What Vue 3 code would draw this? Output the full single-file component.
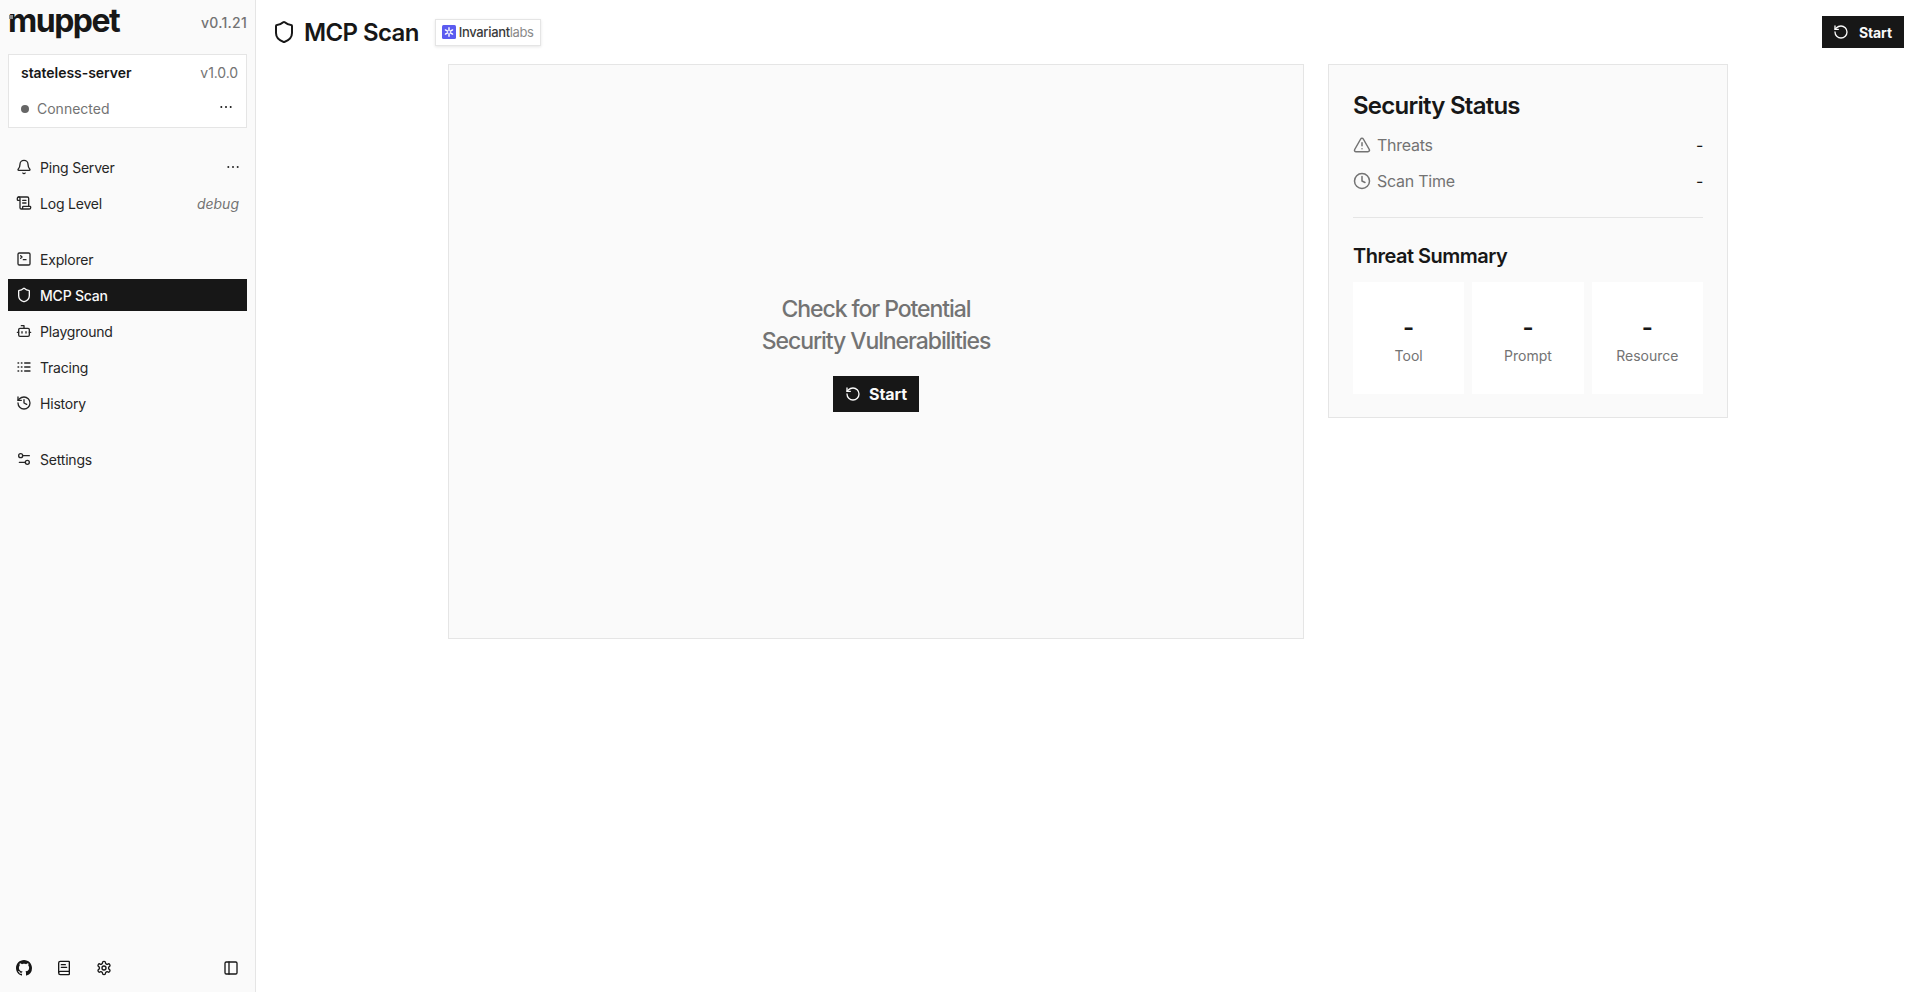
<script setup>
import { h } from 'vue'

const P = {
  shield: ['M20 13c0 5-3.5 7.5-7.66 8.95a1 1 0 0 1-.67-.01C7.5 20.5 4 18 4 13V6a1 1 0 0 1 1-1c2 0 4.5-1.2 6.24-2.72a1.17 1.17 0 0 1 1.52 0C14.51 3.81 17 5 19 5a1 1 0 0 1 1 1z'],
  bell: ['M10.268 21a2 2 0 0 0 3.464 0', 'M3.262 15.326A1 1 0 0 0 4 17h16a1 1 0 0 0 .74-1.673C19.41 13.956 18 12.499 18 8A6 6 0 0 0 6 8c0 4.499-1.411 5.956-2.738 7.326'],
  scroll: ['M15 12h-5', 'M15 8h-5', 'M19 17V5a2 2 0 0 0-2-2H4', 'M8 21h12a2 2 0 0 0 2-2v-1a1 1 0 0 0-1-1H11a1 1 0 0 0-1 1v1a2 2 0 1 1-4 0V5a2 2 0 1 0-4 0v2a1 1 0 0 0 1 1h3'],
  terminal: ['m7 11 2-2-2-2', 'M11 13h4', 'M5 3h14a2 2 0 0 1 2 2v14a2 2 0 0 1-2 2H5a2 2 0 0 1-2-2V5a2 2 0 0 1 2-2z'],
  bot: ['M12 8V4H8', 'M6 8h12a2 2 0 0 1 2 2v8a2 2 0 0 1-2 2H6a2 2 0 0 1-2-2v-8a2 2 0 0 1 2-2z', 'M2 14h2', 'M20 14h2', 'M15 13v2', 'M9 13v2'],
  logs: ['M13 12h8', 'M13 18h8', 'M13 6h8', 'M3 12h1', 'M3 18h1', 'M3 6h1', 'M8 12h1', 'M8 18h1', 'M8 6h1'],
  history: ['M3 12a9 9 0 1 0 9-9 9.75 9.75 0 0 0-6.74 2.74L3 8', 'M3 3v5h5', 'M12 7v5l4 2'],
  sliders: ['M20 7h-9', 'M14 17H5', 'M20 17a3 3 0 1 1-6 0 3 3 0 0 1 6 0z', 'M10 7a3 3 0 1 1-6 0 3 3 0 0 1 6 0z'],
  book: ['M4 19.5v-15A2.5 2.5 0 0 1 6.5 2H19a1 1 0 0 1 1 1v18a1 1 0 0 1-1 1H6.5a1 1 0 0 1 0-5H20', 'M8 11h8', 'M8 7h6'],
  gear: ['M12.22 2h-.44a2 2 0 0 0-2 2v.18a2 2 0 0 1-1 1.73l-.43.25a2 2 0 0 1-2 0l-.15-.08a2 2 0 0 0-2.73.73l-.22.38a2 2 0 0 0 .73 2.73l.15.1a2 2 0 0 1 1 1.72v.51a2 2 0 0 1-1 1.74l-.15.09a2 2 0 0 0-.73 2.73l.22.38a2 2 0 0 0 2.73.73l.15-.08a2 2 0 0 1 2 0l.43.25a2 2 0 0 1 1 1.73V20a2 2 0 0 0 2 2h.44a2 2 0 0 0 2-2v-.18a2 2 0 0 1 1-1.73l.43-.25a2 2 0 0 1 2 0l.15.08a2 2 0 0 0 2.73-.73l.22-.39a2 2 0 0 0-.73-2.73l-.15-.08a2 2 0 0 1-1-1.74v-.5a2 2 0 0 1 1-1.74l.15-.09a2 2 0 0 0 .73-2.73l-.22-.38a2 2 0 0 0-2.73-.73l-.15.08a2 2 0 0 1-2 0l-.43-.25a2 2 0 0 1-1-1.73V4a2 2 0 0 0-2-2z', 'M15 12a3 3 0 1 1-6 0 3 3 0 0 1 6 0z'],
  panel: ['M5 3h14a2 2 0 0 1 2 2v14a2 2 0 0 1-2 2H5a2 2 0 0 1-2-2V5a2 2 0 0 1 2-2z', 'M9 3v18'],
  rotate: ['M3 12a9 9 0 1 0 9-9 9.75 9.75 0 0 0-6.74 2.74L3 8', 'M3 3v5h5'],
  alert: ['m21.73 18-8-14a2 2 0 0 0-3.48 0l-8 14A2 2 0 0 0 4 21h16a2 2 0 0 0 1.73-3', 'M12 9v4', 'M12 17h.01'],
  clock: ['M22 12a10 10 0 1 1-20 0 10 10 0 0 1 20 0z', 'M12 6v6l4 2'],
  dots: ['M12 12h.01', 'M19 12h.01', 'M5 12h.01']
}

const Icon = (props) =>
  h('svg', {
    width: props.size || 16, height: props.size || 16, viewBox: '0 0 24 24', fill: 'none',
    stroke: 'currentColor', 'stroke-width': props.sw || 2, 'stroke-linecap': 'round', 'stroke-linejoin': 'round'
  }, P[props.name].map((d) => h('path', { d })))
Icon.props = ['name', 'size', 'sw']

const group1 = [
  { icon: 'bell', label: 'Ping Server', more: true },
  { icon: 'scroll', label: 'Log Level', note: 'debug' }
]
const group2 = [
  { icon: 'terminal', label: 'Explorer' },
  { icon: 'shield', label: 'MCP Scan', active: true },
  { icon: 'bot', label: 'Playground' },
  { icon: 'logs', label: 'Tracing' },
  { icon: 'history', label: 'History' }
]
const group3 = [{ icon: 'sliders', label: 'Settings' }]
const groups = [group1, group2, group3]
const summary = ['Tool', 'Prompt', 'Resource']
</script>

<template>
  <div class="app">
    <aside class="side">
      <div class="brand">
        <span class="logo"><i class="logo-dot"></i>muppet</span>
        <span class="ver">v0.1.21</span>
      </div>
      <div class="server">
        <div class="srow">
          <span class="sname">stateless-server</span>
          <span class="sver">v1.0.0</span>
        </div>
        <div class="srow low">
          <span class="conn"><i class="dot"></i>Connected</span>
          <Icon name="dots" :sw="3" class="sdots" />
        </div>
      </div>
      <nav class="nav">
        <div v-for="(g, i) in groups" :key="i" class="group">
          <div v-for="item in g" :key="item.label" class="item" :class="{ active: item.active }">
            <Icon :name="item.icon" />
            <span class="lbl">{{ item.label }}</span>
            <Icon v-if="item.more" name="dots" :sw="3" class="idots" />
            <em v-if="item.note" class="note">{{ item.note }}</em>
          </div>
        </div>
      </nav>
      <div class="foot">
        <svg class="gh" width="16" height="16" viewBox="0 0 16 16" fill="currentColor"><path d="M8 0C3.58 0 0 3.58 0 8c0 3.54 2.29 6.53 5.47 7.59.4.07.55-.17.55-.38 0-.19-.01-.82-.01-1.49-2.01.37-2.53-.49-2.69-.94-.09-.23-.48-.94-.82-1.13-.28-.15-.68-.52-.01-.53.63-.01 1.08.58 1.23.82.72 1.21 1.87.87 2.33.66.07-.52.28-.87.51-1.07-1.78-.2-3.64-.89-3.64-3.95 0-.87.31-1.59.82-2.15-.08-.2-.36-1.02.08-2.12 0 0 .67-.21 2.2.82.64-.18 1.32-.27 2-.27.68 0 1.36.09 2 .27 1.53-1.04 2.2-.82 2.2-.82.44 1.1.16 1.92.08 2.12.51.56.82 1.27.82 2.15 0 3.07-1.87 3.75-3.65 3.95.29.25.54.73.54 1.48 0 1.07-.01 1.93-.01 2.2 0 .21.15.46.55.38A8.013 8.013 0 0016 8c0-4.42-3.58-8-8-8z"/></svg>
        <Icon name="book" />
        <Icon name="gear" />
        <Icon name="panel" class="pushr" />
      </div>
    </aside>

    <main class="main">
      <header class="head">
        <Icon name="shield" :size="24" />
        <h1>MCP Scan</h1>
        <span class="badge">
          <svg width="14" height="14" viewBox="0 0 14 14"><rect width="14" height="14" rx="1.5" fill="#5b5bf0"/><g stroke="#fff" stroke-width="1.4" stroke-linecap="round"><path d="M7 2.8v2.6M7 8.6v2.6M3.4 4.9l2.2 1.3M8.4 7.8l2.2 1.3M10.6 4.9 8.4 6.2M5.6 7.8 3.4 9.1"/></g></svg>
          <span class="inv">Invariant<span class="labs">labs</span></span>
        </span>
        <button class="btn top"><Icon name="rotate" />Start</button>
      </header>

      <div class="content">
        <section class="scan">
          <p class="scan-t">Check for Potential<br>Security Vulnerabilities</p>
          <button class="btn"><Icon name="rotate" />Start</button>
        </section>
        <section class="status">
          <h2>Security Status</h2>
          <div class="stat"><Icon name="alert" :size="18" /><span class="stat-l">Threats</span><span class="stat-v">-</span></div>
          <div class="stat"><Icon name="clock" :size="18" /><span class="stat-l">Scan Time</span><span class="stat-v">-</span></div>
          <hr class="rule">
          <h3>Threat Summary</h3>
          <div class="cards">
            <div v-for="s in summary" :key="s" class="card">
              <b>-</b>
              <span>{{ s }}</span>
            </div>
          </div>
        </section>
      </div>
    </main>
  </div>
</template>

<style>
html, body { margin: 0; background: #fff; }
</style>

<style scoped>
.app { display: flex; height: 992px; overflow: hidden; font-family: Inter, "Liberation Sans", sans-serif; color: #171717; background: #fff; }
.side { width: 256px; box-sizing: border-box; border-right: 1px solid #e5e5e5; background: #fafafa; padding: 0 8px; display: flex; flex-direction: column; flex: none; }
.brand { height: 54px; display: flex; justify-content: space-between; align-items: flex-start; box-sizing: border-box; padding-top: 3px; }
.logo { position: relative; font-size: 32px; font-weight: 700; letter-spacing: -1.5px; line-height: 36px; color: #171717; }
.logo-dot { position: absolute; left: 1px; top: 12px; width: 4px; height: 4px; background: #8a8a8a; }
.ver { font-size: 14px; font-weight: 500; color: #737373; margin-top: 8px; margin-left: -2px; line-height: 24px; letter-spacing: .25px; }
.server { height: 74px; box-sizing: border-box; border: 1px solid #e5e5e5; background: #fff; padding: 0 8px 0 12px; }
.srow { display: flex; justify-content: space-between; align-items: center; height: 35px; }
.low { padding-top: 1px; }
.sname { font-size: 14px; font-weight: 600; letter-spacing: -.05px; }
.sver { font-size: 14px; color: #737373; letter-spacing: -.1px; }
.conn { display: flex; align-items: center; gap: 8px; font-size: 14px; color: #737373; }
.dot { width: 8px; height: 8px; border-radius: 50%; background: #666; flex: none; }
.sdots { margin-right: 4px; margin-top: -4px; }
.nav { margin-top: 21px; display: flex; flex-direction: column; gap: 20px; flex: 1; }
.item { height: 36px; display: flex; align-items: center; gap: 8px; padding: 0 8px; font-size: 14px; letter-spacing: -.2px; position: relative; color: #262626; }
.item.active { color: #fafafa; background: #171717; height: 32px; margin: 2px 0; font-weight: 500; }
.lbl { flex: 1; }
.idots { margin-right: -2px; }
.note { color: #737373; font-size: 14px; letter-spacing: 0; }
.foot { height: 48px; display: flex; align-items: center; gap: 24px; padding: 0 8px; }
.gh { color: #171717; }
.pushr { margin-left: auto; }
.main { flex: 1; min-width: 0; display: flex; flex-direction: column; }
.head { height: 64px; box-sizing: border-box; padding: 0 16px; display: flex; align-items: center; gap: 8px; }
.head h1 { margin: 0; font-size: 24px; font-weight: 600; letter-spacing: -.6px; }
.badge { margin-left: 8px; display: flex; align-items: center; gap: 3px; height: 27px; box-sizing: border-box; border: 1px solid #e5e5e5; box-shadow: 0 1px 3px rgba(0,0,0,.1); padding: 0 6px; background: #fff; }
.inv { font-size: 13px; font-weight: 500; color: #3a3a3a; letter-spacing: -.35px; }
.labs { font-weight: 400; color: #8a8a8a; }
.btn { display: inline-flex; align-items: center; gap: 8px; height: 36px; padding: 0 12px; background: #171717; color: #fafafa; border: 0; font: 700 16px Inter, "Liberation Sans", sans-serif; letter-spacing: -.1px; }
.top { margin-left: auto; height: 32px; font-size: 14px; gap: 10px; padding: 0 12px 0 11px; }
.content { width: 1280px; margin: 0 auto; display: flex; gap: 24px; align-items: flex-start; }
.scan { width: 856px; height: 575px; box-sizing: border-box; border: 1px solid #e5e5e5; background: #fafafa; display: flex; flex-direction: column; align-items: center; justify-content: center; gap: 19px; padding-top: 2px; }
.scan-t { margin: 0; font-size: 23px; line-height: 32px; font-weight: 500; letter-spacing: -1.08px; color: #737373; text-align: center; }
.status { width: 400px; height: 354px; box-sizing: border-box; border: 1px solid #e5e5e5; background: #fafafa; padding: 25px 24px 24px; }
.status h2 { margin: 0 0 5px; font-size: 24px; line-height: 32px; font-weight: 600; letter-spacing: -.75px; }
.stat { display: flex; align-items: center; gap: 6px; height: 36px; font-size: 16px; letter-spacing: -.25px; color: #737373; }
.stat-l { flex: 1; }
.stat-v { color: #171717; }
.rule { border: 0; border-top: 1px solid #e5e5e5; margin: 18px 0 24px; }
.status h3 { margin: 0 0 12px; font-size: 20px; line-height: 28px; font-weight: 600; letter-spacing: -.5px; }
.cards { display: grid; grid-template-columns: repeat(3, 1fr); gap: 8px; }
.card { height: 112px; box-sizing: border-box; padding-top: 2px; background: #fff; display: flex; flex-direction: column; align-items: center; justify-content: center; gap: 2px; }
.card b { font-size: 24px; line-height: 32px; font-weight: 600; }
.card span { font-size: 14px; line-height: 20px; color: #737373; }
</style>
